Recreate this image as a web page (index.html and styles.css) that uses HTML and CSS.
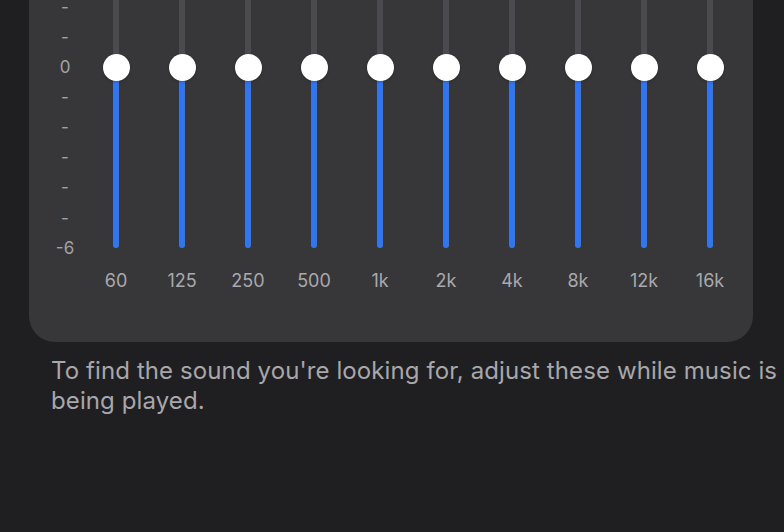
FILE: index.html
```html
<!DOCTYPE html>
<html>
<head>
<meta charset="utf-8">
<link rel="stylesheet" href="styles.css">
</head>
<body>
<div class="page">
  <div class="card">
    <div class="eq">
      <div class="scale">
        <span></span><span></span><span></span><span></span><span>-</span><span>-</span>
        <span>0</span>
        <span>-</span><span>-</span><span>-</span><span>-</span><span>-</span><span>-6</span>
      </div>
      <div class="band"><div class="slot"><div class="track"><div class="fill"></div><div class="knob"></div></div></div><div class="freq">60</div></div>
      <div class="band"><div class="slot"><div class="track"><div class="fill"></div><div class="knob"></div></div></div><div class="freq">125</div></div>
      <div class="band"><div class="slot"><div class="track"><div class="fill"></div><div class="knob"></div></div></div><div class="freq">250</div></div>
      <div class="band"><div class="slot"><div class="track"><div class="fill"></div><div class="knob"></div></div></div><div class="freq">500</div></div>
      <div class="band"><div class="slot"><div class="track"><div class="fill"></div><div class="knob"></div></div></div><div class="freq">1k</div></div>
      <div class="band"><div class="slot"><div class="track"><div class="fill"></div><div class="knob"></div></div></div><div class="freq">2k</div></div>
      <div class="band"><div class="slot"><div class="track"><div class="fill"></div><div class="knob"></div></div></div><div class="freq">4k</div></div>
      <div class="band"><div class="slot"><div class="track"><div class="fill"></div><div class="knob"></div></div></div><div class="freq">8k</div></div>
      <div class="band"><div class="slot"><div class="track"><div class="fill"></div><div class="knob"></div></div></div><div class="freq">12k</div></div>
      <div class="band"><div class="slot"><div class="track"><div class="fill"></div><div class="knob"></div></div></div><div class="freq">16k</div></div>
    </div>
  </div>
  <p class="note">To find the sound you're looking for, adjust these while music is being played.</p>
</div>
</body>
</html>
```

FILE: styles.css
```css
html, body {
  margin: 0;
  padding: 0;
  background: #1f1f21;
  overflow: hidden;
  height: 100%;
}
.page {
  width: 784px;
  height: 532px;
  overflow: hidden;
  font-family: Inter, "Noto Sans", sans-serif;
}
.card {
  margin: -149px 31px 0 29px;
  padding: 20px 10px 50px 18px;
  background: #373739;
  border-radius: 0 0 26px 26px;
}
.eq {
  display: flex;
}
.scale {
  width: 36px;
  display: grid;
  grid-template-rows: repeat(13, 30.15px);
  align-items: center;
  justify-items: center;
  color: #a2a2a6;
  font-size: 17px;
  line-height: 12px;
}
.band {
  width: 66px;
  display: flex;
  flex-direction: column;
  align-items: center;
}
.slot {
  height: 392px;
  padding: 15px 0;
  box-sizing: border-box;
  display: flex;
  justify-content: center;
}
.track {
  position: relative;
  width: 6px;
  height: 100%;
  background: #4b4b4f;
  border-radius: 3px;
}
.fill {
  position: absolute;
  left: 0;
  right: 0;
  top: 50%;
  bottom: 0;
  background: #3176ee;
  border-radius: 0 0 3px 3px;
}
.knob {
  position: absolute;
  left: 50%;
  top: 50%;
  width: 27px;
  height: 27px;
  margin: -13.5px 0 0 -13.5px;
  border-radius: 50%;
  background: #ffffff;
  box-shadow: 0 1px 3px rgba(0,0,0,0.25);
}
.freq {
  margin-top: 7px;
  font-size: 18px;
  line-height: 22px;
  color: #a9a9ad;
}
.note {
  margin: 14px 0 0 51px;
  width: 732px;
  font-size: 24px;
  letter-spacing: 0.1px;
  line-height: 30px;
  color: #a7a7ac;
}
```
